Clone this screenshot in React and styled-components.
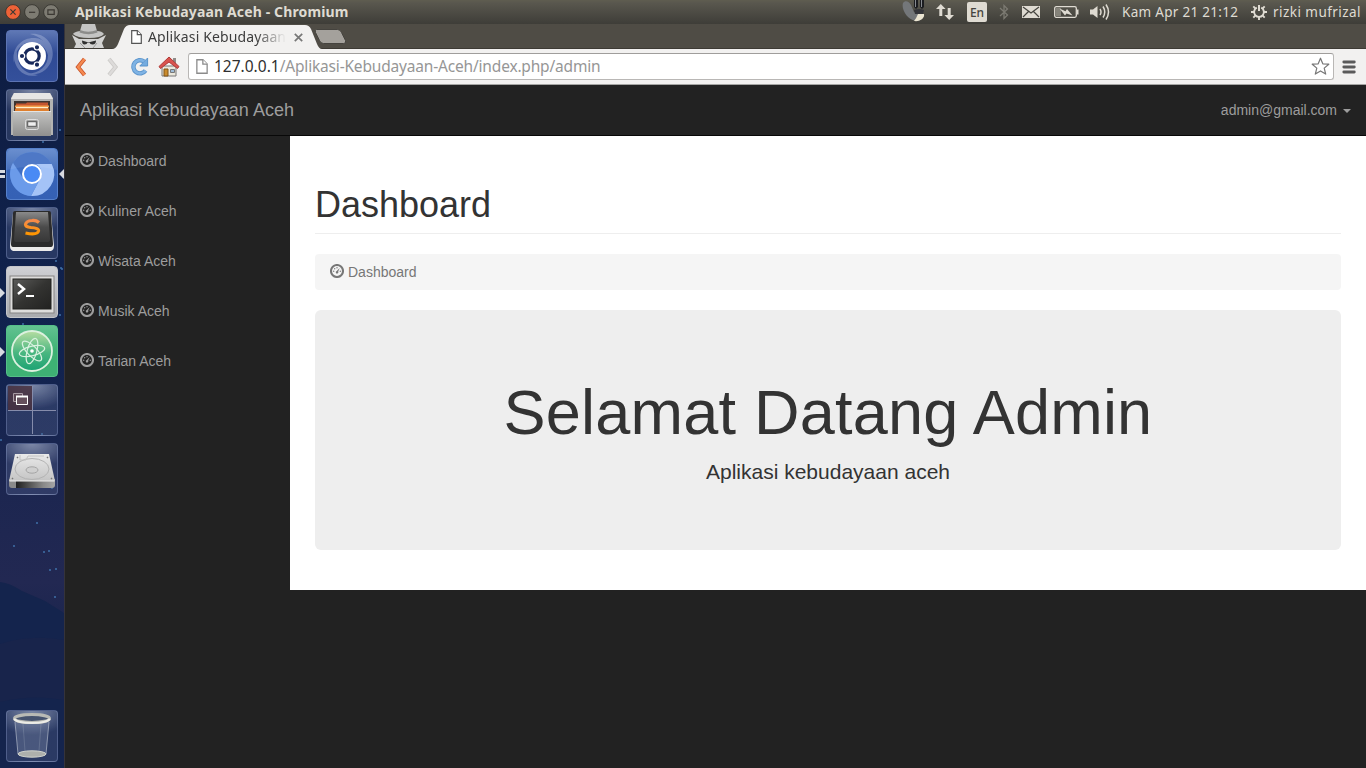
import React from "react";
import styled, { createGlobalStyle } from "styled-components";

const GlobalStyle = createGlobalStyle`
  * { box-sizing: border-box; }
  body { margin: 0; background: #222; overflow: hidden; }
  svg { display: block; flex: none; }
`;

const uiFont = `"Noto Sans", "Open Sans", sans-serif`;

const Desktop = styled.div`
  width: 1366px;
  height: 768px;
  display: flex;
  flex-direction: column;
  overflow: hidden;
  font-family: "Liberation Sans", Arial, sans-serif;
  font-size: 14px;
  line-height: 20px;
  color: #333;
`;

/* ---------- top panel ---------- */

const Panel = styled.header`
  height: 24px;
  flex: none;
  display: flex;
  align-items: center;
  padding: 0 5px;
  background: linear-gradient(#5f5d50 0, #59574e 3px, #3e3d38 24px);
  font-family: ${uiFont};
  color: #dfdbd2;
`;

const WindowButtons = styled.div`
  display: flex;
  gap: 3px;
  width: 70px;
`;

const WindowTitle = styled.div`
  flex: 1;
  font-size: 14px;
  font-weight: 700;
  letter-spacing: ${(p) => p.$track};
  white-space: nowrap;
`;

const Indicator = styled.div`
  width: ${(p) => p.$w}px;
  height: 24px;
  display: flex;
  align-items: center;
  justify-content: center;
  flex: none;
`;

const LangBadge = styled.span`
  width: 20px;
  height: 20px;
  border-radius: 2px;
  background: #dfdbd2;
  color: #45443e;
  font-size: 12px;
  font-weight: 500;
  line-height: 21px;
  text-align: center;
`;

const PanelText = styled.span`
  width: ${(p) => p.$w}px;
  font-size: 13.5px;
  letter-spacing: ${(p) => p.$track};
  white-space: nowrap;
  flex: none;
`;

/* ---------- launcher ---------- */

const Workspace = styled.div`
  flex: 1;
  display: flex;
  min-height: 0;
`;

const Launcher = styled.aside`
  position: relative;
  width: 65px;
  flex: none;
  display: flex;
  flex-direction: column;
  gap: 7px;
  padding: 6px 0 6px 6px;
  border-right: 1px solid #35333a;
  background: linear-gradient(#0e1d42 0, #11234f 45%, #1c2650 62%, #222852 75%, #16234b 86%, #15224a 100%);
`;

const Backdrop = styled.svg`
  position: absolute;
  left: 0;
  top: 0;
`;

const Tile = styled.div`
  position: relative;
  width: 52px;
  height: 52px;
  flex: none;
  border-radius: 4px;
  border: 1px solid ${(p) => p.$edge || "rgba(140,155,200,.38)"};
  background: ${(p) => p.$bg || "radial-gradient(ellipse 40px 24px at 50% 0, rgba(200,210,232,.55), rgba(90,105,150,.22)), rgba(80,92,135,.16)"};
  margin-top: ${(p) => (p.$last ? "auto" : "0")};
  svg { margin: -1px; }
`;

const Pip = styled.i`
  position: absolute;
  left: -7px;
  top: 21px;
  border: 5px solid transparent;
  border-left: 5px solid #d8dae0;
  border-right: 0;
`;

const DoublePip = styled.i`
  position: absolute;
  left: -7px;
  top: 21px;
  width: 5px;
  height: 8px;
  border-top: 3px solid #d8dae0;
  border-bottom: 3px solid #d8dae0;
`;

const FocusPip = styled.i`
  position: absolute;
  left: 52px;
  top: 20px;
  border: 5px solid transparent;
  border-right: 5px solid #d8dae0;
  border-left: 0;
`;

/* ---------- browser chrome ---------- */

const Browser = styled.main`
  flex: 1;
  display: flex;
  flex-direction: column;
  min-width: 0;
  background: #222;
`;

const TabStrip = styled.div`
  height: 25px;
  display: flex;
  background: #4f4c45;
  border-bottom: 1px solid #3d3a34;
  flex: none;
`;

const Incognito = styled.div`
  width: 47px;
  padding-left: 6px;
`;

const Tab = styled.div`
  position: relative;
  width: 210px;
  height: 25px;
  display: flex;
  align-items: center;
  padding: 1px 0 0 19px;
  font-family: ${uiFont};
`;

const TabShape = styled.svg`
  position: absolute;
  left: 0;
  top: 0;
`;

const TabIcon = styled.svg`
  position: relative;
`;

const TabTitle = styled.span`
  position: relative;
  width: 138px;
  margin: 0 8px 0 6px;
  overflow: hidden;
  white-space: nowrap;
  font-size: 14px;
  letter-spacing: 0.12px;
  color: #3c3c3c;
  mask-image: linear-gradient(90deg, #000 108px, transparent 138px);
`;

const NewTab = styled.svg`
  margin: 5px 0 0 -9px;
`;

const Toolbar = styled.div`
  height: 36px;
  flex: none;
  display: flex;
  align-items: center;
  padding: 0 10px 0 7px;
  background: #f2f1f0;
  border-bottom: 1px solid #a5a5a3;
`;

const ToolButton = styled.div`
  width: ${(p) => p.$w || 29}px;
  flex: none;
`;

const AddressBar = styled.div`
  flex: 1;
  height: 27px;
  margin-right: 8px;
  display: flex;
  align-items: center;
  padding: 0 3px 0 7px;
  background: #fff;
  border: 1px solid #b9b7b5;
  border-top-color: #9f9d9b;
  border-radius: 3px;
`;

const Url = styled.span`
  flex: 1;
  margin: -2px 0 0 6px;
  font-family: ${uiFont};
  font-size: 15.5px;
  letter-spacing: ${(p) => p.$track};
  color: #969696;
  white-space: nowrap;
  b { color: #2f2f2f; font-weight: 400; letter-spacing: 0; }
`;

/* ---------- page ---------- */

const Navbar = styled.nav`
  height: 51px;
  flex: none;
  display: flex;
  align-items: center;
  justify-content: space-between;
  padding: 0 15px;
  background: #222;
  border-bottom: 1px solid #080808;
  color: #9d9d9d;
`;

const Brand = styled.span`
  font-size: 18px;
  letter-spacing: 0.04px;
`;

const Account = styled.span`
  display: flex;
  align-items: center;
  gap: 6px;
`;

const Caret = styled.i`
  border: 4px solid transparent;
  border-top-color: #9d9d9d;
  border-bottom: 0;
  margin-top: 1px;
`;

const Columns = styled.div`
  display: flex;
  align-items: flex-start;
`;

const Sidebar = styled.ul`
  width: 225px;
  flex: none;
  margin: 0;
  padding: 0;
  list-style: none;
  color: #9d9d9d;
`;

const IconLabel = styled.span`
  display: flex;
  gap: 4px;
  svg { margin-top: 2px; }
`;

const MenuItem = styled.li`
  padding: 15px;
`;

const Content = styled.section`
  flex: 1;
  height: 454px;
  padding: 49px 25px 0;
  background: #fff;
`;

const PageHeader = styled.h1`
  margin: 0 0 20px;
  padding-bottom: 8px;
  border-bottom: 1px solid #eee;
  font-size: 36px;
  font-weight: 400;
  line-height: 40px;
`;

const Breadcrumb = styled.div`
  height: 36px;
  margin-bottom: 20px;
  padding: 8px 15px;
  background: #f5f5f5;
  border-radius: 4px;
  color: #777;
`;

const Jumbotron = styled.div`
  height: 240px;
  padding: 68px 60px 0;
  background: #eee;
  border-radius: 6px;
  text-align: center;
`;

const Welcome = styled.h1`
  margin: 0 0 10px;
  font-size: 63px;
  font-weight: 400;
  line-height: 69px;
  letter-spacing: 0.22px;
`;

const Lead = styled.p`
  margin: 0;
  font-size: 21px;
  line-height: 30px;
`;

const Gauge = () => (
  <svg width="14" height="14" viewBox="0 0 14 14" fill="currentColor">
    <circle cx="7" cy="7" r="6" fill="none" stroke="currentColor" strokeWidth="2.1" />
    <circle cx="3.7" cy="7.200" r=".7" />
    <circle cx="4.7" cy="4.7" r=".7" />
    <circle cx="7" cy="3.7" r=".7" />
    <circle cx="10.3" cy="7.200" r=".7" />
    <path d="m9.700 3.900-1.500 3.700a1.300 1.300 0 1 1-1.500-.6Z" />
  </svg>
);

const PageIcon = ({ h = 14, w = 11, color = "#555", fill = "#fff" }) => (
  <TabIcon width={w} height={h} viewBox="0 0 11 14" fill={fill} stroke={color} strokeWidth="1.2">
    <path d="M.7.7h5.6l4 4v8.6H.7Z" />
    <path d="M6.3.7v4h4" />
  </TabIcon>
);

const SystemButton = ({ kind }) => (
  <svg width="16" height="16" viewBox="0 0 16 16">
    <circle cx="8" cy="8" r="7.4" fill={kind === "close" ? "#ee6237" : "#7d7b72"} stroke="#36342f" strokeWidth=".9" />
    <g fill="none" stroke="#3b3833" strokeWidth="1.2">
      {kind === "close" && <path d="m5.4 5.4 5.2 5.2m0-5.2-5.2 5.2" />}
      {kind === "min" && <path d="M5 8.3h6.2" />}
      {kind === "max" && <path d="M4.9 5.8h6.3v4.6H4.9Z" />}
    </g>
  </svg>
);

const TopPanel = () => (
  <Panel>
    <WindowButtons>
      <SystemButton kind="close" />
      <SystemButton kind="min" />
      <SystemButton kind="max" />
    </WindowButtons>
    <WindowTitle $track="0.14px">Aplikasi Kebudayaan Aceh - Chromium</WindowTitle>
    <Indicator $w={26}>
      <svg width="24" height="24" viewBox="0 0 24 24">
        <path d="M1 3C3 0 7 1 9 5l3 7 8 1c3 5-1 8-6 8C5 20-1 9 1 3Z" fill="#74777a" />
        <path d="M12 0h4v7l-2 2-2-2Zm6 0h4v7l-2 2-2-2Z" fill="#1b1c20" />
        <path d="M13.500 0v7m6-7v7" stroke="#85898f" />
        <path d="M12 10q5-2 10 0l-1 4h-8Z" fill="#34353a" />
        <path d="M12 21q2-2 4-7l6 0c1 4-4 8-10 7Z" fill="#ebe5d2" />
      </svg>
    </Indicator>
    <Indicator $w={36}>
      <svg width="18" height="16" viewBox="0 0 18 16" fill="#dfdbd2">
        <path d="M4.800 0 9.600 5H6.300v7h-3V5H0Zm8.400 16L8.400 11h3.300V4h3v7H18Z" />
      </svg>
    </Indicator>
    <Indicator $w={28}><LangBadge>En</LangBadge></Indicator>
    <Indicator $w={26}>
      <svg width="10" height="16" viewBox="0 0 10 16" fill="none" stroke="#7c7a72" strokeWidth="1.3">
        <path d="m1 4 7.500 7-3.500 3.500v-13L8.500 5 1 12" />
      </svg>
    </Indicator>
    <Indicator $w={28}>
      <svg width="18" height="12" viewBox="0 0 18 12">
        <path d="M0 0h18v12H0Z" fill="#dfdbd2" />
        <path d="m1 1 8 6 8-6M1 11l5.500-5.500M17 11l-5.500-5.500" fill="none" stroke="#45443e" strokeWidth="1.2" />
      </svg>
    </Indicator>
    <Indicator $w={42}>
      <svg width="25" height="12" viewBox="0 0 25 12">
        <rect x=".7" y=".7" width="21.600" height="10.600" rx="1.500" fill="none" stroke="#dfdbd2" strokeWidth="1.3" />
        <path d="M23 3.500h1.500v5H23Z" fill="#dfdbd2" />
        <path d="M2 2h5v8H2Z" fill="#85837a" />
        <path d="m5.500 2.500 6 2.800 1.500-2.300 5.500 6.500-6-2-1.500 2Z" fill="#dfdbd2" />
      </svg>
    </Indicator>
    <Indicator $w={26}>
      <svg width="20" height="16" viewBox="0 0 20 16">
        <path d="M0 5.500h3L7.500 2v12L3 10.500H0Z" fill="#dfdbd2" />
        <path d="M10 5q2 3 0 6m3-8.500q3.500 5.500 0 11m3-13q5 7.500 0 15" fill="none" stroke="#dfdbd2" strokeWidth="1.5" />
      </svg>
    </Indicator>
    <Indicator $w={9} />
    <PanelText $w={129} $track="0.3px">Kam Apr 21 21:12</PanelText>
    <Indicator $w={16}>
      <svg width="16" height="16" viewBox="0 0 16 16" fill="none" stroke="#dfdbd2">
        <path d="M5.800 3.600a4.900 4.900 0 1 0 4.400 0" strokeWidth="1.900" />
        <path d="M8 1v6" strokeWidth="2" />
        <path d="M8 13v3M0 8h3m10 0h3M2.300 2.300l2 2m7.400 7.400 2 2m0-11.400-2 2m-7.400 7.400-2 2" strokeWidth="1.900" />
      </svg>
    </Indicator>
    <Indicator $w={6} />
    <PanelText $w={88} $track="0.45px">rizki mufrizal</PanelText>
  </Panel>
);

const DashIcon = () => (
  <svg width="52" height="52" viewBox="0 0 52 52">
    <g fill="#d3dcf3" opacity=".3">
      <path d="M8 33C5 18 16 7 29 8c12 1 17 12 14 22C42 18 34 12 26 12 15 12 9 20 8 33Z" />
      <path d="M24 4c17-2 27 14 21 28-5 11-16 14-24 12 13-1 21-8 21-19C42 13 34 6 24 4Z" />
      <path d="M8 24C7 38 18 49 32 45 21 44 14 39 12 30l-1-8Z" />
    </g>
    <circle cx="26" cy="26" r="14" fill="#fff" />
    <circle cx="26" cy="26" r="7.200" fill="none" stroke="#17285a" strokeWidth="3.200" />
    <g fill="#17285a" stroke="#fff" strokeWidth="1.200">
      <circle cx="16" cy="26" r="2.700" /><circle cx="31" cy="17.300" r="2.700" /><circle cx="31" cy="34.700" r="2.700" />
    </g>
  </svg>
);

const FilesIcon = () => (
  <svg width="52" height="52" viewBox="0 0 52 52">
    <defs>
      <linearGradient id="cab" x2="0" y2="1"><stop stopColor="#c4c4c2" /><stop offset="1" stopColor="#8f8f8e" /></linearGradient>
    </defs>
    <path d="M8 4h36l3 5v37H5V9Z" fill="#b4b4b2" />
    <path d="m8 4-3 6h42l-3-6Z" fill="#e6e6e4" />
    <path d="M8 12h36v11H8Z" fill="#3f3530" />
    <path d="M10 14.500h10l1-1h21v9H10Z" fill="#c4562f" />
    <path d="M9 16.500h34v2H9Z" fill="#f5a04c" />
    <path d="M10 18h32v1.500H10Z" fill="#fff0c8" /><path d="M9 19.500h34v3H9Z" fill="#df7f2d" />
    <path d="M7 22h38v25H7Z" fill="url(#cab)" />
    <path d="M7 22.500h38" stroke="#e4e4e2" />
    <rect x="19.500" y="30.500" width="13" height="10" rx="2" fill="#a3a3a2" stroke="#dedede" />
    <rect x="21.700" y="32.700" width="8.600" height="4.600" fill="#eee" stroke="#555" />
  </svg>
);

const ChromiumIcon = () => (
  <svg width="52" height="52" viewBox="0 0 52 52">
    <circle cx="26" cy="26" r="22" fill="#4e80d6" />
    <path d="M7 15A22 22 0 0 1 45.500 16L26 17a10 10 0 0 0-9 12Z" fill="#3f6dc2" />
    <path d="M45.700 16A22 22 0 0 1 25 48l9.500-18a10 10 0 0 0-5-14Z" fill="#a4c3f7" />
    <path d="M7 15A22 22 0 0 0 25 48l8-15a10 10 0 0 1-15-1Z" fill="#6b9bea" />
    <circle cx="26" cy="26" r="9" fill="#4a8af4" stroke="#fff" strokeWidth="2" />
    <path d="M6 1h40q4 0 5 5v16Q26 15 1 22V6Q2 1 6 1Z" fill="#fff" opacity=".08" />
  </svg>
);

const SublimeIcon = () => (
  <svg width="52" height="52" viewBox="0 0 52 52">
    <defs>
      <linearGradient id="subKey" x2="0" y2="1"><stop stopColor="#8a8a8a" /><stop offset=".5" stopColor="#4b4b4b" /><stop offset="1" stopColor="#373737" /></linearGradient>
      <linearGradient id="subS" x2="0" y2="1"><stop stopColor="#f58a4a" /><stop offset="1" stopColor="#ff9600" /></linearGradient>
    </defs>
    <path d="M7 6h38l3 33q0 4-3 5H7q-3-1-3-5Z" fill="#ecebea" />
    <path d="M9 4h34q2 0 2 2l2 31q0 3-2 3H7q-2 0-2-3L7 6q0-2 2-2Z" fill="#2b2b2b" />
    <path d="M10 5h32l2 27q0 3-2 3H10q-2 0-2-3Z" fill="url(#subKey)" />
    <path d="M33 15.500q-3-2.500-7-2-6 .5-6.500 4 0 2.500 5.500 3 8 .5 7.500 3.500-1 4.500-13 2" fill="none" stroke="url(#subS)" strokeWidth="3.200" />
  </svg>
);

const TerminalIcon = () => (
  <svg width="52" height="52" viewBox="0 0 52 52">
    <defs><linearGradient id="term" x2="1" y2="1"><stop stopColor="#5c5c5a" /><stop offset=".5" stopColor="#333331" /><stop offset="1" stopColor="#222221" /></linearGradient></defs>
    <rect x="4" y="10" width="44" height="37" fill="#dddcdb" stroke="#858484" />
    <rect x="7" y="13" width="38" height="30" fill="url(#term)" stroke="#20201f" />
    <path d="m12 18 6 5-6 5" fill="none" stroke="#fff" strokeWidth="2.500" />
    <path d="M20 30h8" stroke="#fff" strokeWidth="2" />
  </svg>
);

const AtomIcon = () => (
  <svg width="52" height="52" viewBox="0 0 52 52">
    <defs><linearGradient id="atom" x2="0" y2="1"><stop stopColor="#b6dda2" /><stop offset=".55" stopColor="#48b680" /><stop offset="1" stopColor="#1ba273" /></linearGradient></defs>
    <circle cx="26" cy="26" r="20" fill="url(#atom)" stroke="#dcf1df" strokeWidth="1.800" />
    <g fill="none" stroke="#d9f1e0" strokeWidth="1.200">
      <ellipse cx="26" cy="26" rx="13" ry="4.800" transform="rotate(-14 26 26)" />
      <ellipse cx="26" cy="26" rx="13" ry="4.800" transform="rotate(46 26 26)" />
      <ellipse cx="26" cy="26" rx="13" ry="4.800" transform="rotate(106 26 26)" />
    </g>
    <circle cx="26" cy="26" r="1.800" fill="#fff" />
  </svg>
);

const SwitcherIcon = () => (
  <svg width="52" height="52" viewBox="0 0 52 52">
    <path d="M2 2h24v24H2Z" fill="#49313f" opacity=".85" />
    <path d="M26.500 2v48M2 26.500h48" stroke="#858cab" strokeWidth="1" />
    <path d="M7.500 9.500h9v8h-9Z" fill="#5c4655" stroke="#a89ba4" />
    <path d="M10.500 12.500h11v8h-11Z" fill="#65505d" stroke="#fff" />
    <path d="M10 12.500h12" stroke="#fff" strokeWidth="2" />
  </svg>
);

const DiskIcon = () => (
  <svg width="52" height="52" viewBox="0 0 52 52">
    <defs>
      <linearGradient id="disk" x2="0" y2="1"><stop stopColor="#e9e9e9" /><stop offset="1" stopColor="#c4c4c4" /></linearGradient>
      <linearGradient id="diskFront"><stop stopColor="#8a8a8a" /><stop offset=".15" stopColor="#8a8a8a" /><stop offset=".16" stopColor="#202020" /><stop offset=".75" stopColor="#8a8a8a" /><stop offset="1" stopColor="#a5a5a5" /></linearGradient>
    </defs>
    <path d="M3 36h46v6q0 3-3 3H6q-3 0-3-3Z" fill="url(#diskFront)" />
    <path d="M9 11h34l6 27H3Z" fill="url(#disk)" />
    <ellipse cx="26" cy="26" rx="17" ry="10.500" fill="none" stroke="#b3b3b3" />
    <ellipse cx="26" cy="27" rx="6" ry="3.200" fill="#cfcfcf" stroke="#a5a5a5" />
    <path d="M14 12v5h6l2-4h16" fill="none" stroke="#c2c2c2" />
    <path d="M3.500 38h45" stroke="#eee" />
    <path d="m11 14 1 1m29-1 1 1M6 35l1 1m38-1 1 1" stroke="#777" strokeWidth="1.500" />
  </svg>
);

const TrashIcon = () => (
  <svg width="52" height="52" viewBox="0 0 52 52">
    <path d="m9 10 3 35q14 4 28 0l3-35Z" fill="#a3afc7" opacity=".25" />
    <path d="m9 12 3 32m31-32-3 32" stroke="#c4cbd8" opacity=".6" fill="none" />
    <path d="m17 14 2 27m16-27-2 27" stroke="#c4cbd8" opacity=".2" fill="none" />
    <ellipse cx="26" cy="44" rx="14" ry="3.200" fill="#adb0ac" stroke="#cfd2cc" />
    <ellipse cx="26" cy="8.500" rx="17.500" ry="4" fill="#46536f" stroke="#b9bab5" strokeWidth="3" />
    <path d="M8 9q4 4 18 4t18-4" fill="none" stroke="#ececE7" strokeWidth="2" />
  </svg>
);

const stars = [[60, 106], [43, 118], [63, 153], [56, 237], [61, 244], [62, 245], [60, 291], [23, 300], [1, 416], [42, 410], [52, 464], [37, 499], [14, 522], [49, 527], [44, 528], [56, 545], [50, 546], [55, 573]];

const LauncherBar = () => (
  <Launcher>
    <Backdrop width="64" height="744" viewBox="0 0 64 744">
      <path d="M0 558q10 1 22 9l23 10 19 12v155H0Z" fill="#14244d" />
      <path d="M0 620q30-10 64-4v60q-30-6-64 2Z" fill="#1b2449" opacity=".5" />
      <g fill="#3f70a8">{stars.map(([x, y]) => <circle key={`${x}-${y}`} cx={x} cy={y} r="1" />)}</g>
    </Backdrop>
    <Tile $bg="linear-gradient(#5f78b5, #2f4a94 45%, #34509b)" $edge="#5c74b4"><DashIcon /></Tile>
    <Tile><FilesIcon /></Tile>
    <Tile $bg="linear-gradient(#5e86cb, #3763b6 45%, #3561b5)" $edge="#5580cb"><DoublePip /><FocusPip /><ChromiumIcon /></Tile>
    <Tile><SublimeIcon /></Tile>
    <Tile $bg="linear-gradient(#cfd0d4, #a9aaae)" $edge="#c4c5ca"><Pip /><TerminalIcon /></Tile>
    <Tile $bg="linear-gradient(#62c291, #3eb174 50%)" $edge="#55bf88"><Pip /><AtomIcon /></Tile>
    <Tile><SwitcherIcon /></Tile>
    <Tile><DiskIcon /></Tile>
    <Tile $last><TrashIcon /></Tile>
  </Launcher>
);

const BrowserTabs = () => (
  <TabStrip>
    <Incognito>
      <svg width="36" height="24" viewBox="0 0 36 24">
        <path d="M11 0h13l2 7q5 0 7 3-3 4-15 4T2 10q1-2 7-3Z" fill="#c4c4c3" />
        <path d="M9 6q8 3.500 17 0l.5 2.500q-9 3.500-18 0Z" fill="#8c8c8a" />
        <path d="m1 11 7 4h19l8-4-4 8 2 5H3l2-4Z" fill="#d3d3d2" />
        <path d="M11 16.500 16 18h3l6-1.500q0 4-3.500 4-2.500 0-3-2h-2q-.5 2-3 2-2.500 0-2.500-4Z" fill="#303030" />
        <path d="m9 19 5 5M26 19l-4 5" stroke="#999" />
      </svg>
    </Incognito>
    <Tab>
      <TabShape width="210" height="25" viewBox="0 0 210 25">
        <path d="M0 25q4 0 6-5l6-15q2-4 6-4h175q4 0 6 4l6 15q2 5 5 5Z" fill="#f2f1f0" />
      </TabShape>
      <PageIcon />
      <TabTitle>Aplikasi Kebudayaan Aceh</TabTitle>
      <TabIcon width="9" height="9" viewBox="0 0 9 9" stroke="#777" strokeWidth="1.700">
        <path d="m.8.8 7.400 7.400m0-7.400L.8 8.200" />
      </TabIcon>
    </Tab>
    <NewTab width="34" height="16" viewBox="0 0 34 16">
      <path d="M3.500.5h21q3 0 4 3l4 8q1 3-2 3h-20q-3 0-4-3l-4-8q-1-3 1-3Z" fill="#a4a19c" stroke="#45433e" />
    </NewTab>
  </TabStrip>
);

const BrowserToolbar = () => (
  <Toolbar>
    <ToolButton>
      <svg width="18" height="20" viewBox="0 0 18 20" fill="none"><path d="M12.500 2 6 10l6.500 8" stroke="#c8542c" strokeWidth="4" /><path d="M12.500 2 6 10l6.500 8" stroke="#f58a50" strokeWidth="2.400" /></svg>
    </ToolButton>
    <ToolButton>
      <svg width="20" height="20" viewBox="0 0 20 20" fill="none"><path d="m8 2 6.500 8L8 18" stroke="#cbc9c7" strokeWidth="4" /><path d="m8 2 6.500 8L8 18" stroke="#dddbda" strokeWidth="2.400" /></svg>
    </ToolButton>
    <ToolButton $w={28}>
      <svg width="19" height="19" viewBox="0 0 19 19" fill="none"><path d="M15.500 13.500A6.600 6.600 0 1 1 14 4.500" stroke="#5b94cb" strokeWidth="4.400" /><path d="M17.600 1v8H9.800Z" fill="#75ace0" stroke="#5b94cb" /><path d="M15.500 13.500A6.600 6.600 0 1 1 14 4.500" stroke="#7fb3e4" strokeWidth="2.700" /></svg>
    </ToolButton>
    <ToolButton $w={30}>
      <svg width="22" height="21" viewBox="0 0 22 21">
        <path d="M4 10h14v10H4Z" fill="#ebe8dc" stroke="#777" />
        <path d="M15 2h3v6h-3Z" fill="#8f8a86" />
        <path d="m11 1 10 9.500-1.500 2L11 6l-8.500 6.500-1.500-2Z" fill="#d9534e" stroke="#b03a37" />
        <path d="M6 13h4v7H6Z" fill="#c98b2c" stroke="#805518" />
        <path d="M12.500 13.500h4v3h-4Z" fill="#9fbdd8" stroke="#777" />
      </svg>
    </ToolButton>
    <AddressBar>
      <PageIcon w={12} h={15} color="#8b8b8b" />
      <Url $track="-0.18px"><b>127.0.0.1</b>/Aplikasi-Kebudayaan-Aceh/index.php/admin</Url>
      <svg width="19" height="19" viewBox="0 0 19 19" fill="#fff" stroke="#777" strokeWidth="1.200" strokeLinejoin="round"><path d="m9.500 1.200 2.300 5.600 6 .4-4.600 3.900 1.500 6-5.200-3.200-5.200 3.200 1.500-6L1.200 7.200l6-.4Z" /></svg>
    </AddressBar>
    <svg width="14" height="14" viewBox="0 0 14 14" stroke="#5a5a5a" strokeWidth="2.800" strokeLinecap="round"><path d="M1.800 2h10.500m-10.500 5h10.500m-10.500 5h10.500" /></svg>
  </Toolbar>
);

const menu = ["Dashboard", "Kuliner Aceh", "Wisata Aceh", "Musik Aceh", "Tarian Aceh"];

export default function App() {
  return (
    <Desktop>
      <GlobalStyle />
      <TopPanel />
      <Workspace>
        <LauncherBar />
        <Browser>
          <BrowserTabs />
          <BrowserToolbar />
          <Navbar>
            <Brand>Aplikasi Kebudayaan Aceh</Brand>
            <Account>admin@gmail.com<Caret /></Account>
          </Navbar>
          <Columns>
            <Sidebar>
              {menu.map((label) => (
                <MenuItem key={label}><IconLabel><Gauge />{label}</IconLabel></MenuItem>
              ))}
            </Sidebar>
            <Content>
              <PageHeader>Dashboard</PageHeader>
              <Breadcrumb><IconLabel><Gauge />Dashboard</IconLabel></Breadcrumb>
              <Jumbotron>
                <Welcome>Selamat Datang Admin</Welcome>
                <Lead>Aplikasi kebudayaan aceh</Lead>
              </Jumbotron>
            </Content>
          </Columns>
        </Browser>
      </Workspace>
    </Desktop>
  );
}
